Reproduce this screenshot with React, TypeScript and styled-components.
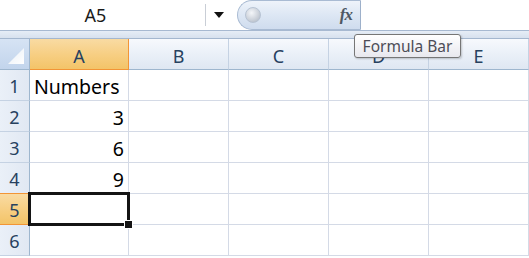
import React from "react";
import styled, { createGlobalStyle } from "styled-components";

const Global = createGlobalStyle`
  html, body { margin: 0; padding: 0; background: #ffffff; }
  body { font-family: "Noto Sans", "DejaVu Sans", sans-serif; width: 529px; height: 258px; overflow: hidden; }
`;

const Page = styled.div`
  position: relative;
  width: 529px;
  height: 258px;
  display: flex;
  flex-direction: column;
  background: #ffffff;
`;

const TopBar = styled.div`
  display: flex;
  height: 30px;
  border-bottom: 1px solid #a7b9d1;
  background: #ffffff;
`;

const NameBox = styled.div`
  width: 206px;
  display: flex;
  align-items: center;
  justify-content: center;
  font-size: 18px;
  color: #1a1a1a;
  padding-right: 14px;
  box-sizing: border-box;
  border-right: 1px solid #c9ced6;
  margin: 4px 0;
`;

const DropArea = styled.div`
  width: 31px;
  display: flex;
  align-items: center;
  justify-content: center;
  padding-right: 6px;
  box-sizing: border-box;
`;

const Pill = styled.div`
  width: 124px;
  box-sizing: border-box;
  display: flex;
  align-items: center;
  justify-content: space-between;
  padding: 0 8px 0 7px;
  border: 1px solid #a9bbd3;
  border-right: 1px solid #9db0ca;
  border-radius: 16px 0 0 16px;
  background: linear-gradient(#eef3fa 0%, #dde7f4 50%, #cfdcee 100%);
`;

const Knob = styled.div`
  width: 14px;
  height: 14px;
  border-radius: 50%;
  background: radial-gradient(circle at 40% 35%, #f4f6f9 0%, #c9cfd8 60%, #aab3c0 100%);
  border: 1px solid #b7c3d3;
`;

const Fx = styled.span`
  font-family: "Liberation Serif", "DejaVu Serif", serif;
  font-style: italic;
  font-weight: bold;
  font-size: 17px;
  color: #4f5863;
  letter-spacing: -1px;
`;

const FormulaInput = styled.div`
  flex: 1;
  background: #ffffff;
`;

const Band = styled.div`
  height: 7px;
  background: linear-gradient(#e6edf6, #d7e1ee);
  border-bottom: 1px solid #a4b7cf;
`;

const Grid = styled.div`
  display: grid;
  grid-template-columns: 30px 99px 100px 100px 100px 100px;
  grid-template-rows: 31px repeat(6, 31px);
`;

const Corner = styled.div`
  position: relative;
  box-sizing: border-box;
  background: linear-gradient(#d6e3f4, #c2d4ec);
  border-right: 1px solid #9eb6ce;
  border-bottom: 1px solid #9eb6ce;
`;

const CornerTri = styled.svg`
  position: absolute;
  right: 5px;
  bottom: 5px;
`;

const ColHead = styled.div<{ $active?: boolean }>`
  box-sizing: border-box;
  display: flex;
  align-items: center;
  justify-content: center;
  font-size: 18px;
  color: #27415f;
  padding-top: 3px;
  background: ${(p) =>
    p.$active
      ? "linear-gradient(#f9dba3 0%, #f7cf84 50%, #f3c468 100%)"
      : "linear-gradient(#f7f9fd 0%, #eaf0f8 50%, #dfe7f2 100%)"};
  border-right: 1px solid ${(p) => (p.$active ? "#f29536" : "#c5d2e3")};
  border-bottom: 1px solid ${(p) => (p.$active ? "#f29536" : "#9eb6ce")};
  ${(p) => (p.$active ? "border-left: 1px solid #f29536; margin-left: -1px;" : "")}
`;

const RowHead = styled.div<{ $active?: boolean }>`
  box-sizing: border-box;
  display: flex;
  align-items: center;
  justify-content: center;
  font-size: 18px;
  color: #27415f;
  padding-top: 2px;
  background: ${(p) =>
    p.$active
      ? "linear-gradient(#f9dba3 0%, #f7cf84 50%, #f3c468 100%)"
      : "linear-gradient(90deg, #eaf0f8, #e1e8f3)"};
  border-right: 1px solid ${(p) => (p.$active ? "#f29536" : "#9eb6ce")};
  border-bottom: 1px solid ${(p) => (p.$active ? "#f29536" : "#c5d2e3")};
  ${(p) => (p.$active ? "border-top: 1px solid #f29536; margin-top: -1px;" : "")}
`;

const Cell = styled.div<{ $align?: "left" | "right"; $selected?: boolean }>`
  position: relative;
  z-index: ${(p) => (p.$selected ? 2 : "auto")};
  box-sizing: border-box;
  display: flex;
  align-items: center;
  justify-content: ${(p) => (p.$align === "right" ? "flex-end" : "flex-start")};
  padding: 2px 4px 0 4px;
  font-size: 19.5px;
  color: #000000;
  border-right: 1px solid #d4dae6;
  border-bottom: 1px solid #d4dae6;
`;

const Selection = styled.div`
  position: absolute;
  left: -2px;
  top: -2px;
  right: -2px;
  bottom: -2px;
  border: 3px solid #141414;
  pointer-events: none;
`;

const Handle = styled.div`
  position: absolute;
  right: -6px;
  bottom: -6px;
  width: 7px;
  height: 7px;
  background: #141414;
  border: 1px solid #ffffff;
`;

const Tooltip = styled.div`
  position: absolute;
  z-index: 5;
  left: 354px;
  top: 34px;
  width: 107px;
  height: 24px;
  box-sizing: border-box;
  display: flex;
  align-items: center;
  justify-content: center;
  font-family: "Noto Sans", "DejaVu Sans", sans-serif;
  font-size: 15.5px;
  color: #4d4d57;
  background: linear-gradient(#ffffff, #e8e8ee);
  border: 1px solid #767676;
  border-radius: 3px;
  box-shadow: 1px 1px 2px rgba(0, 0, 0, 0.2);
`;

const cols = ["A", "B", "C", "D", "E"];
const data: Record<number, { text: string; align: "left" | "right" }> = {
  1: { text: "Numbers", align: "left" },
  2: { text: "3", align: "right" },
  3: { text: "6", align: "right" },
  4: { text: "9", align: "right" },
};

export default function App() {
  return (
    <Page>
      <Global />
      <TopBar>
        <NameBox>A5</NameBox>
        <DropArea>
          <svg width="10" height="6" viewBox="0 0 10 6">
            <path d="M0 0 H10 L5 6 Z" fill="#111" />
          </svg>
        </DropArea>
        <Pill>
          <Knob />
          <Fx>fx</Fx>
        </Pill>
        <FormulaInput />
      </TopBar>
      <Band />
      <Grid>
        <Corner>
          <CornerTri width="16" height="16" viewBox="0 0 16 16">
            <defs>
              <linearGradient id="tri" x1="0" y1="0" x2="1" y2="1">
                <stop offset="0" stopColor="#e8eef6" />
                <stop offset="1" stopColor="#ffffff" />
              </linearGradient>
            </defs>
            <path d="M16 0 V16 H0 Z" fill="url(#tri)" />
          </CornerTri>
        </Corner>
        {cols.map((c) => (
          <ColHead key={c} $active={c === "A"}>
            {c}
          </ColHead>
        ))}
        {[1, 2, 3, 4, 5, 6].map((r) => (
          <React.Fragment key={r}>
            <RowHead $active={r === 5}>{r}</RowHead>
            {cols.map((c) => {
              const d = c === "A" ? data[r] : undefined;
              const sel = c === "A" && r === 5;
              return (
                <Cell key={c} $align={d?.align} $selected={sel}>
                  {d?.text}
                  {sel && (
                    <Selection>
                      <Handle />
                    </Selection>
                  )}
                </Cell>
              );
            })}
          </React.Fragment>
        ))}
      </Grid>
      <Tooltip>Formula Bar</Tooltip>
    </Page>
  );
}
